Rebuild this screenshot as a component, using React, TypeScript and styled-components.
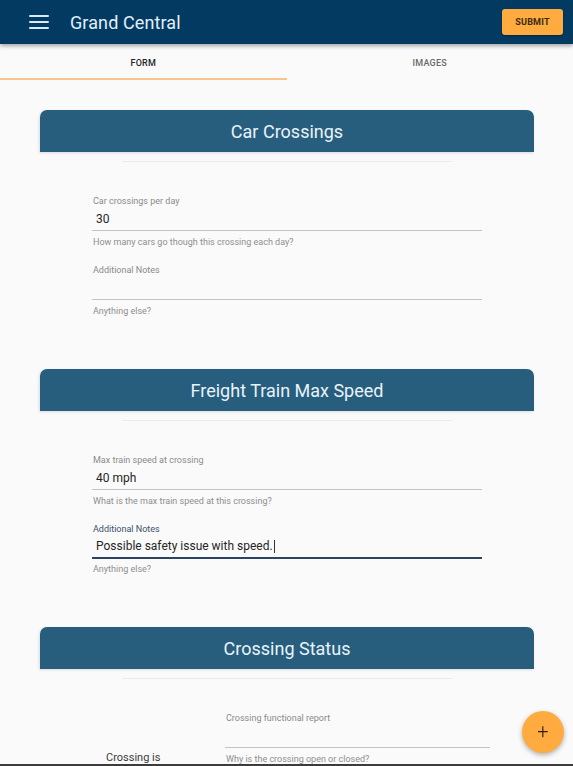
import React from "react";
import styled, { createGlobalStyle } from "styled-components";

const Global = createGlobalStyle`
  html, body { margin: 0; padding: 0; background: #fafafa; }
  body { font-family: Roboto, "Noto Sans", Arial, sans-serif; overflow: hidden; }
  * { box-sizing: border-box; }
`;

const Page = styled.div`
  display: flex;
  flex-direction: column;
  min-height: 766px;
  background: #fafafa;
`;

const AppBar = styled.header`
  height: 44px;
  background: #023a61;
  display: flex;
  align-items: center;
  padding: 0 10px 0 29px;
  box-shadow: 0 2px 4px rgba(0, 0, 0, 0.35);
  position: relative;
  z-index: 2;
`;

const Burger = styled.div`
  width: 20px;
  height: 14px;
  display: flex;
  flex-direction: column;
  justify-content: space-between;
  margin-right: 21px;
  span {
    display: block;
    height: 2px;
    background: #dce9f4;
    border-radius: 1px;
  }
`;

const Title = styled.h1`
  margin: 0;
  font-size: 18px;
  font-weight: 400;
  color: #e3effa;
  flex: 1;
  letter-spacing: 0.1px;
`;

const SubmitButton = styled.button`
  width: 61px;
  height: 26px;
  border: none;
  border-radius: 3px;
  background: #ffab40;
  color: #3b2a12;
  font-family: Roboto, sans-serif;
  font-weight: 700;
  font-size: 9px;
  letter-spacing: 0.2px;
  box-shadow: 0 1px 2px rgba(0, 0, 0, 0.35);
  padding: 0;
`;

const Tabs = styled.nav`
  display: flex;
  height: 36px;
  background: #fafafa;
`;

const Tab = styled.div<{ $active?: boolean }>`
  flex: 1;
  display: flex;
  align-items: center;
  justify-content: center;
  font-size: 9px;
  font-weight: 500;
  letter-spacing: 0.2px;
  color: ${(p) => (p.$active ? "#1f1f1f" : "#6a6a6a")};
  border-bottom: 2px solid ${(p) => (p.$active ? "#f8c48c" : "transparent")};
  padding-top: 4px;
`;

const Content = styled.main`
  display: flex;
  flex-direction: column;
  padding: 30px 39px 0 40px;
  gap: 52px;
`;

const Card = styled.section`
  display: flex;
  flex-direction: column;
`;

const CardHeader = styled.div`
  height: 42px;
  background: #285e7d;
  border-radius: 7px 7px 0 0;
  display: flex;
  align-items: center;
  justify-content: center;
  color: #e8f3fb;
  font-size: 18px;
  box-shadow: -1px 1px 3px rgba(0, 0, 0, 0.12);
`;

const Divider = styled.hr`
  width: 330px;
  margin: 9px auto 0;
  border: none;
  border-top: 1px solid #ebebeb;
`;

const Fields = styled.div`
  display: flex;
  flex-direction: column;
  gap: 16px;
  width: 390px;
  margin: 33px auto 0;
`;

const FieldWrap = styled.div`
  display: flex;
  flex-direction: column;
`;

const Label = styled.label<{ $focused?: boolean }>`
  font-size: 9px;
  line-height: 12px;
  color: ${(p) => (p.$focused ? "#3a5168" : "#8a8a8a")};
  padding-left: 1px;
`;

const InputBox = styled.div<{ $focused?: boolean }>`
  height: 24px;
  display: flex;
  align-items: center;
  padding-left: 4px;
  font-size: 12px;
  color: #262626;
  border-bottom: ${(p) => (p.$focused ? "2px solid #2a4561" : "1px solid #c4c4c4")};
  margin-bottom: ${(p) => (p.$focused ? "0" : "1px")};
`;

const Caret = styled.span`
  display: inline-block;
  width: 1px;
  height: 13px;
  background: #333;
  margin-left: 1px;
`;

const Helper = styled.div`
  font-size: 9px;
  line-height: 12px;
  margin-top: 4px;
  color: #8e8e8e;
  padding-left: 1px;
`;

const StatusRow = styled.div`
  display: grid;
  grid-template-columns: 133px 265px;
  margin: 33px 0 0 52px;
`;

const SideLabel = styled.div`
  align-self: end;
  padding-left: 14px;
  font-size: 11px;
  color: #3a3a3a;
  line-height: 12px;
  margin-bottom: 1px;
`;

const Fab = styled.button`
  position: fixed;
  right: 9px;
  bottom: 13px;
  width: 42px;
  height: 42px;
  border-radius: 50%;
  border: none;
  background: #ffab40;
  color: #2a1f10;
  font-size: 20px;
  font-weight: 300;
  line-height: 1;
  display: flex;
  align-items: center;
  justify-content: center;
  box-shadow: 0 2px 5px rgba(0, 0, 0, 0.3);
  padding: 0 0 2px;
  font-family: Roboto, sans-serif;
`;

const BottomEdge = styled.div`
  position: fixed;
  left: 0;
  right: 0;
  bottom: 0;
  height: 2px;
  background: #3c3c3c;
`;

type FieldProps = {
  label: string;
  value?: string;
  helper: string;
  focused?: boolean;
};

const Field = ({ label, value, helper, focused }: FieldProps) => (
  <FieldWrap>
    <Label $focused={focused}>{label}</Label>
    <InputBox $focused={focused}>
      {value}
      {focused && <Caret />}
    </InputBox>
    <Helper>{helper}</Helper>
  </FieldWrap>
);

export default function App() {
  return (
    <Page>
      <Global />
      <AppBar>
        <Burger>
          <span />
          <span />
          <span />
        </Burger>
        <Title>Grand Central</Title>
        <SubmitButton>SUBMIT</SubmitButton>
      </AppBar>
      <Tabs>
        <Tab $active>FORM</Tab>
        <Tab>IMAGES</Tab>
      </Tabs>
      <Content>
        <Card>
          <CardHeader>Car Crossings</CardHeader>
          <Divider />
          <Fields>
            <Field
              label="Car crossings per day"
              value="30"
              helper="How many cars go though this crossing each day?"
            />
            <Field label="Additional Notes" helper="Anything else?" />
          </Fields>
        </Card>
        <Card>
          <CardHeader>Freight Train Max Speed</CardHeader>
          <Divider />
          <Fields>
            <Field
              label="Max train speed at crossing"
              value="40 mph"
              helper="What is the max train speed at this crossing?"
            />
            <Field
              label="Additional Notes"
              value="Possible safety issue with speed."
              helper="Anything else?"
              focused
            />
          </Fields>
        </Card>
        <Card>
          <CardHeader>Crossing Status</CardHeader>
          <Divider />
          <StatusRow>
            <SideLabel>Crossing is</SideLabel>
            <Field
              label="Crossing functional report"
              helper="Why is the crossing open or closed?"
            />
          </StatusRow>
        </Card>
      </Content>
      <Fab>+</Fab>
      <BottomEdge />
    </Page>
  );
}
